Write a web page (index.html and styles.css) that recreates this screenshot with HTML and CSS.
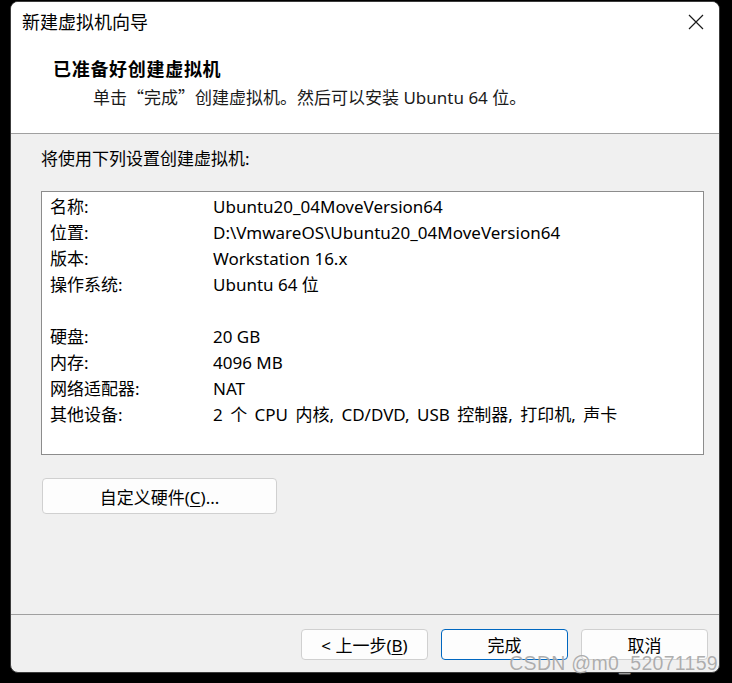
FILE: index.html
```html
<!DOCTYPE html>
<html lang="zh-CN">
<head>
<meta charset="utf-8">
<title>新建虚拟机向导</title>
<link rel="stylesheet" href="styles.css">
</head>
<body>
<div class="window">
  <div class="titlebar">
    <span class="title">新建虚拟机向导</span>
    <svg class="close" width="16" height="16" viewBox="0 0 16 16"><path d="M1 1 L15 15 M15 1 L1 15" stroke="#1a1a1a" stroke-width="1.2" fill="none"/></svg>
  </div>
  <div class="header">
    <div class="h-title">已准备好创建虚拟机</div>
    <div class="h-sub">单击<span class="cjk">“</span>完成<span class="cjk">”</span>创建虚拟机。然后可以安装 Ubuntu 64 位。</div>
  </div>
  <div class="content">
    <div class="intro">将使用下列设置创建虚拟机:</div>
    <div class="summary">
      <div class="row"><span class="lbl">名称:</span><span>Ubuntu20_04MoveVersion64</span></div>
      <div class="row"><span class="lbl">位置:</span><span>D:\VmwareOS\Ubuntu20_04MoveVersion64</span></div>
      <div class="row"><span class="lbl">版本:</span><span>Workstation 16.x</span></div>
      <div class="row"><span class="lbl">操作系统:</span><span>Ubuntu 64 位</span></div>
      <div class="row"><span class="lbl"></span><span></span></div>
      <div class="row"><span class="lbl">硬盘:</span><span>20 GB</span></div>
      <div class="row"><span class="lbl">内存:</span><span>4096 MB</span></div>
      <div class="row"><span class="lbl">网络适配器:</span><span>NAT</span></div>
      <div class="row"><span class="lbl">其他设备:</span><span class="wide">2 个 CPU 内核, CD/DVD, USB 控制器, 打印机, 声卡</span></div>
    </div>
    <button class="btn custom">自定义硬件(<u>C</u>)...</button>
  </div>
  <div class="footer">
    <button class="btn">&lt; 上一步(<u>B</u>)</button>
    <button class="btn primary">完成</button>
    <button class="btn">取消</button>
  </div>
</div>
<div class="watermark">CSDN @m0_52071159</div>
</body>
</html>
```
FILE: styles.css
```css
html, body {
  margin: 0;
  padding: 0;
  background: #000;
  width: 732px;
  height: 683px;
  overflow: hidden;
}
body {
  font-family: "Noto Sans", "Noto Sans CJK SC", sans-serif;
  font-size: 17px;
  color: #000;
  position: relative;
}
.window {
  box-sizing: border-box;
  margin: 1px 0 0 10px;
  width: 710px;
  height: 672px;
  border: 1px solid #3c3c3c;
  border-radius: 8px;
  overflow: hidden;
  background: #f0f0f0;
  display: flex;
  flex-direction: column;
}
.titlebar {
  height: 40px;
  background: #fff;
  display: flex;
  align-items: center;
  justify-content: space-between;
  padding: 0 15px 0 11px;
  flex-shrink: 0;
}
.title {
  font-size: 18px;
  line-height: 22px;
}
.close { display: block; }
.header {
  height: 91px;
  background: #fff;
  border-bottom: 1px solid #a0a0a0;
  padding-left: 42px;
  flex-shrink: 0;
  box-sizing: content-box;
}
.h-title {
  margin-top: 16px;
  font-weight: 700;
  font-size: 18px;
  letter-spacing: 0.7px;
  line-height: 22px;
}
.h-sub {
  margin-top: 6px;
  padding-left: 40px;
  line-height: 22px;
  color: #1a1a1a;
}
.cjk {
  font-family: "Noto Sans CJK SC", sans-serif;
}
.content {
  flex: 1;
  padding: 15px 0 0 30px;
  border-bottom: 1px solid #a0a0a0;
}
.intro {
  line-height: 20px;
}
.summary {
  box-sizing: border-box;
  margin-top: 22px;
  width: 663px;
  height: 264px;
  background: #fff;
  border: 1px solid #8c8c8c;
  padding: 2px 8px 1px;
}
.row {
  display: flex;
  height: 26px;
  line-height: 26px;
  white-space: nowrap;
}
.lbl {
  width: 163px;
  flex-shrink: 0;
}
.wide {
  word-spacing: 3px;
}
.btn {
  font-family: inherit;
  font-size: 17px;
  color: #000;
  background: #fdfdfd;
  border: 1px solid #d0d0d0;
  border-radius: 4px;
  box-sizing: border-box;
  padding: 0;
  width: 127px;
  height: 31px;
}
.btn u { text-underline-offset: 2px; }
.custom {
  margin-top: 23px;
  margin-left: 1px;
  width: 235px;
  height: 36px;
}
.footer {
  height: 57px;
  flex-shrink: 0;
  display: flex;
  justify-content: flex-end;
  align-items: flex-start;
  gap: 13px;
  padding: 14px 11px 0 0;
  box-sizing: border-box;
}
.primary {
  border-color: #0067c0;
}
.watermark {
  position: absolute;
  right: 14px;
  bottom: 8px;
  font-family: "Liberation Sans", Arial, sans-serif;
  font-size: 19.5px;
  color: rgba(160, 160, 160, 0.85);
  text-shadow: 0 0 1px rgba(255,255,255,0.6);
  letter-spacing: 0.3px;
}
```
